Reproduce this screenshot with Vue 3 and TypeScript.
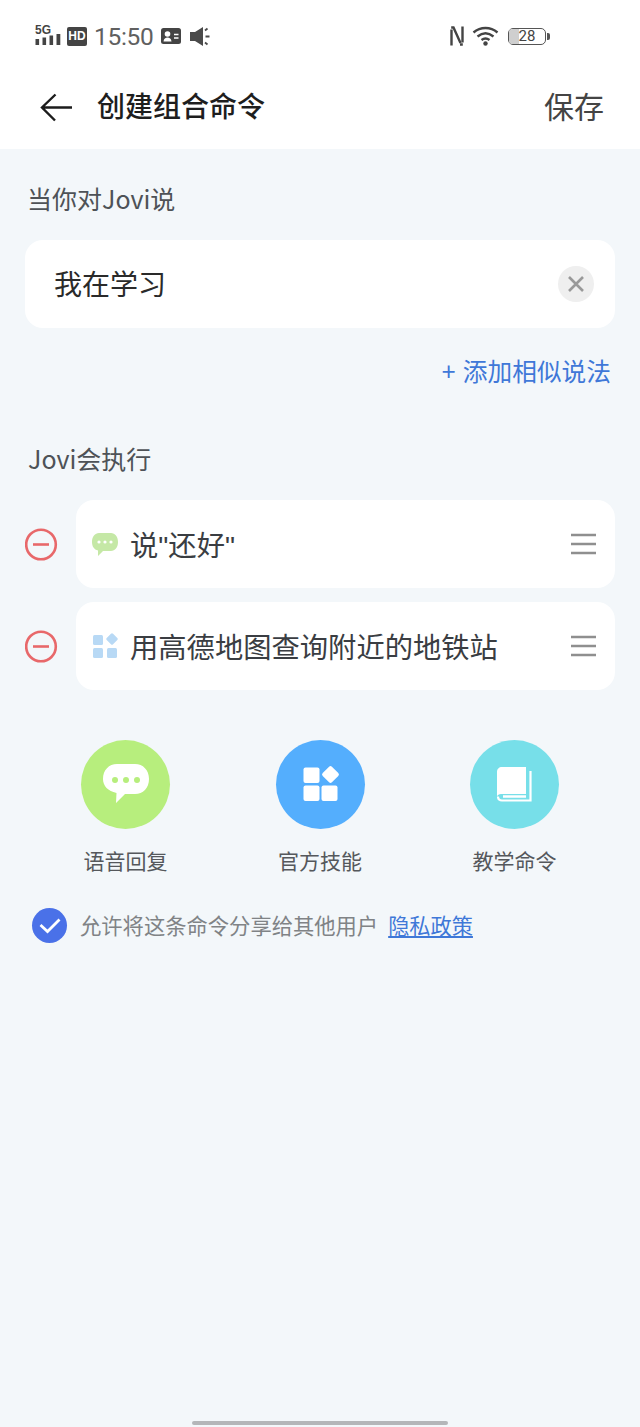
<script setup lang="ts">
// 组合命令里的执行步骤
const steps = [
  { id: 1, kind: 'reply', text: '说"还好"' },
  { id: 2, kind: 'skill', text: '用高德地图查询附近的地铁站' },
]

const actions = [
  { id: 'reply', label: '语音回复', color: '#b7ee7d' },
  { id: 'skill', label: '官方技能', color: '#54aefd' },
  { id: 'book', label: '教学命令', color: '#77dfe9' },
]
</script>

<template>
  <div class="page">
    <header class="top">
      <div class="status">
        <div class="status-left">
          <svg class="sig" width="28" height="24" viewBox="0 0 28 24">
            <text x="0" y="10" class="sig-text">5G</text>
            <rect x="0.500" y="15" width="3.600" height="6" fill="#444" />
            <rect x="7.500" y="13.500" width="3.600" height="7.500" fill="#444" />
            <rect x="14.500" y="11.500" width="3.600" height="9.500" fill="#444" />
            <rect x="21.500" y="10" width="3.800" height="11" fill="#444" />
          </svg>
          <span class="hd">HD</span>
          <span class="time">15:50</span>
          <svg width="20" height="16" viewBox="0 0 20 16">
            <rect width="20" height="16" rx="2.500" fill="#444" />
            <circle cx="6.500" cy="6" r="2.800" fill="#fff" />
            <path d="M2.500 13.500c.4-3 2-4 4-4s3.600 1 4 4z" fill="#fff" />
            <path d="M13 6.500h4.500M13 10h4.500" stroke="#fff" stroke-width="1.600" />
          </svg>
          <svg class="vol" width="20" height="19" viewBox="0 0 20 19">
            <path d="M0 5h5l8-5v19l-8-5H0z" fill="#4a4a4a" />
            <path d="M15 3.500l2.500-2M15.500 9.500h4M15 15.500l2.500 2" stroke="#4a4a4a" stroke-width="1.800" fill="none" />
          </svg>
        </div>
        <div class="status-right">
          <svg width="14" height="20" viewBox="0 0 14 20" fill="none" stroke="#444" stroke-width="2.400">
            <path d="M1.500 19.500V3.500M1.200 1.500h2.300l7 15.500" />
            <path d="M12.500 .5V16.500M12.800 18.500h-2.800" />
          </svg>
          <svg class="wifi" width="28" height="20" viewBox="0 0 28 20" fill="none" stroke="#444" stroke-width="2.400">
            <path d="M1.500 6.500C8.500 .5 18.500 .5 25.500 6.500" />
            <path d="M5.500 10.500c5-4 11-4 16 0" />
            <path d="M9.500 14c3-2.200 5-2.200 8 0" />
            <circle cx="13.500" cy="17.500" r="2.200" fill="#444" stroke="none" />
          </svg>
          <div class="battery">
            <div class="battery-level"></div>
            <span class="battery-num">28</span>
          </div>
        </div>
      </div>
      <div class="nav">
        <svg class="back" width="34" height="30" viewBox="0 0 34 30" fill="none" stroke="#1c1c1c" stroke-width="2.400">
          <path d="M2 14.500h30M15.500 1.500L2 14.500l13 13" />
        </svg>
        <h1 class="title">创建组合命令</h1>
        <span class="save">保存</span>
      </div>
    </header>

    <main class="body">
      <p class="section first">当你对Jovi说</p>
      <div class="card phrase">
        <span class="phrase-text">我在学习</span>
        <span class="clear">
          <svg width="18" height="18" viewBox="0 0 18 18" stroke="#999" stroke-width="2.600">
            <path d="M2 2l14 14M16 2L2 16" />
          </svg>
        </span>
      </div>
      <p class="add">+ 添加相似说法</p>

      <p class="section second">Jovi会执行</p>
      <ul class="steps">
        <li v-for="step in steps" :key="step.id" class="step">
          <svg class="remove" width="33" height="33" viewBox="0 0 33 33" fill="none" stroke="#e8686a" stroke-width="2.600">
            <circle cx="16" cy="16.500" r="14.800" />
            <path d="M8 16.500h16" />
          </svg>
          <div class="card step-card">
            <svg v-if="step.kind === 'reply'" class="step-icon" width="28" height="28" viewBox="0 0 28 28">
              <path d="M8 3h12c4 0 7 3.500 7 9s-3 9-7 9h-8l-5 5v-5.500C3 19.500 1 16.500 1 12c0-5.500 3-9 7-9z" fill="#c5e8a6" />
              <circle cx="8" cy="12" r="1.600" fill="#fff" />
              <circle cx="14" cy="12" r="1.600" fill="#fff" />
              <circle cx="20" cy="12" r="1.600" fill="#fff" />
            </svg>
            <svg v-else class="step-icon" width="28" height="28" viewBox="0 0 28 28" fill="#b8d9f5">
              <rect x="2" y="3" width="10" height="10" rx="1.500" />
              <rect x="2" y="16" width="10" height="10" rx="1.500" />
              <rect x="16" y="16" width="10" height="10" rx="1.500" />
              <rect x="16.500" y="2.500" width="9" height="9" rx="1.500" transform="rotate(45 21 7)" />
            </svg>
            <span class="step-text">{{ step.text }}</span>
            <svg class="drag" width="25" height="22" viewBox="0 0 25 22" stroke="#8f8f8f" stroke-width="2.400">
              <path d="M0 2h25M0 11h25M0 20h25" />
            </svg>
          </div>
        </li>
      </ul>

      <div class="actions">
        <div v-for="action in actions" :key="action.id" class="action">
          <span class="action-circle" :style="{ background: action.color }">
            <svg v-if="action.id === 'reply'" width="46" height="42" viewBox="0 0 46 42">
              <path d="M14 0h18c8 0 14 6 14 15s-6 15-14 15H22l-9 9 .5-10C5 27 0 22 0 15 0 6 6 0 14 0z" fill="#fff" />
              <circle cx="12" cy="16" r="3" fill="#b7ee7d" />
              <circle cx="23" cy="16" r="3" fill="#b7ee7d" />
              <circle cx="34" cy="16" r="3" fill="#b7ee7d" />
            </svg>
            <svg v-else-if="action.id === 'skill'" class="skill-icon" width="36" height="36" viewBox="0 0 36 36" fill="#fff">
              <rect x="1.500" y="0.500" width="16" height="15.500" rx="2" />
              <rect x="1.500" y="18.500" width="16" height="15.500" rx="2" />
              <rect x="19.500" y="18.500" width="16" height="15.500" rx="2" />
              <rect x="22" y="1" width="13" height="13" rx="2" transform="rotate(45 28.500 7.500)" />
            </svg>
            <svg v-else width="36" height="36" viewBox="0 0 36 36" fill="none">
              <path d="M5 0h24v27H4c-2 0-3.500 1-4 2.500V5c0-3 2-5 5-5z" fill="#fff" />
              <path d="M33.500 4v29.500H5c-2.500 0-4-1.500-4-4" stroke="#fff" stroke-width="2.200" />
              <path d="M6 29.500h23" stroke="#fff" stroke-width="2.500" />
            </svg>
          </span>
          <span class="action-label">{{ action.label }}</span>
        </div>
      </div>

      <div class="share">
        <span class="check">
          <svg width="22" height="17" viewBox="0 0 22 17" fill="none" stroke="#fff" stroke-width="2.800">
            <path d="M1.500 8l7 6.500L20.500 2.500" />
          </svg>
        </span>
        <span class="share-text">允许将这条命令分享给其他用户</span>
        <a class="policy">隐私政策</a>
      </div>

      <div class="home-bar"></div>
    </main>
  </div>
</template>

<style>
html,
body {
  margin: 0;
  background: #f3f7fa;
}
</style>

<style scoped>
.page {
  width: 640px;
  height: 1427px;
  display: flex;
  flex-direction: column;
  overflow: hidden;
  font-family: "Noto Sans CJK SC", "Noto Sans", sans-serif;
  background: #f3f7fa;
}

.top {
  height: 149px;
  flex-shrink: 0;
  background: #fff;
}

.status {
  height: 72px;
  box-sizing: border-box;
  padding: 24px 94px 0 35px;
  display: flex;
  justify-content: space-between;
  align-items: flex-start;
}

.status-left {
  display: flex;
  align-items: center;
  height: 24px;
}

.sig {
  overflow: visible;
}

.sig-text {
  font: 700 12px "Liberation Sans", sans-serif;
  fill: #444;
}

.hd {
  width: 20px;
  height: 19px;
  margin-left: 4px;
  border-radius: 2px;
  background: #444;
  color: #fff;
  font: 700 12px/19px "Liberation Sans", sans-serif;
  text-align: center;
}

.time {
  margin: 2px 7px 0 7px;
  font: 400 24.500px/24px Roboto, sans-serif;
  color: #606060;
  letter-spacing: -0.300px;
}

.vol {
  margin-left: 9px;
}

.status-right {
  display: flex;
  align-items: center;
  height: 24px;
}

.wifi {
  margin-left: 8px;
}

.battery {
  position: relative;
  width: 36px;
  height: 15px;
  margin-left: 8px;
  border: 1.500px solid #555;
  border-radius: 5px;
}

.battery::after {
  content: "";
  position: absolute;
  right: -4.500px;
  top: 4px;
  width: 2.500px;
  height: 7px;
  border-radius: 0 2px 2px 0;
  background: #555;
}

.battery-level {
  width: 10px;
  height: 100%;
  border-radius: 3px 0 0 3px;
  background: #cfcfcf;
}

.battery-num {
  position: absolute;
  inset: 0;
  text-align: center;
  font: 400 15px/15px Roboto, sans-serif;
  color: #444;
}

.nav {
  height: 76px;
  display: flex;
  align-items: center;
  padding: 0 36px 10px 40px;
  box-sizing: border-box;
}

.back {
  flex-shrink: 0;
  margin-top: 5px;
}

.title {
  flex: 1;
  margin: 0 0 0 23px;
  font-size: 28px;
  font-weight: 500;
  line-height: 40px;
  color: #1e1e1e;
}

.save {
  font-size: 30px;
  line-height: 40px;
  color: #444;
}

.body {
  flex: 1;
  display: flex;
  flex-direction: column;
  padding: 0 25px;
}

.section {
  margin: 0 0 0 3px;
  font-size: 25px;
  line-height: 36px;
  color: #4e5257;
}

.first {
  margin: 31px 0 0 2px;
}

.second {
  margin-top: 52px;
}

.card {
  background: #fff;
  border-radius: 18px;
}

.phrase {
  height: 88px;
  margin-top: 24px;
  padding: 0 21px 0 29px;
  display: flex;
  align-items: center;
  justify-content: space-between;
}

.phrase-text {
  margin-bottom: 3px;
  font-size: 28px;
  color: #2a2a2a;
}

.clear {
  width: 36px;
  height: 36px;
  border-radius: 50%;
  background: #efefef;
  display: flex;
  align-items: center;
  justify-content: center;
}

.add {
  margin: 24px 4px 0 0;
  text-align: right;
  font-size: 24.700px;
  word-spacing: 2px;
  line-height: 36px;
  color: #3f78d8;
}

.steps {
  list-style: none;
  margin: 24px 0 0;
  padding: 0;
  display: flex;
  flex-direction: column;
  gap: 14px;
}

.step {
  display: flex;
  align-items: center;
  gap: 18px;
}

.remove {
  flex-shrink: 0;
}

.step-card {
  flex: 1;
  height: 88px;
  padding: 0 19px 0 15px;
  display: flex;
  align-items: center;
}

.step-icon {
  flex-shrink: 0;
}

.step-text {
  flex: 1;
  margin: 0 0 2px 11px;
  font-family: "Liberation Sans", "Noto Sans CJK SC", sans-serif;
  font-size: 28.300px;
  color: #3a3d42;
}

.actions {
  display: flex;
  margin: 50px 0 0 56px;
  gap: 105.500px;
}

.action {
  width: 89px;
  display: flex;
  flex-direction: column;
  align-items: center;
  gap: 16px;
}

.action-circle {
  width: 89px;
  height: 89px;
  border-radius: 50%;
  display: flex;
  align-items: center;
  justify-content: center;
}

.skill-icon {
  overflow: visible;
}

.action-label {
  font-size: 21px;
  line-height: 30px;
  white-space: nowrap;
  color: #55585c;
}

.share {
  display: flex;
  align-items: center;
  margin: 33px 0 0 7px;
}

.check {
  width: 35px;
  height: 35px;
  border-radius: 50%;
  background: #4a71e8;
  display: flex;
  align-items: center;
  justify-content: center;
}

.share-text {
  margin: 0 0 2px 13px;
  font-size: 21.300px;
  line-height: 30px;
  color: #808386;
}

.policy {
  margin: 0 0 2px 10px;
  font-size: 21.200px;
  line-height: 30px;
  color: #3f78d8;
  text-decoration: underline;
}

.home-bar {
  width: 256px;
  height: 4px;
  margin: auto auto 2px;
  border-radius: 2px;
  background: #b4b6b9;
}
</style>
